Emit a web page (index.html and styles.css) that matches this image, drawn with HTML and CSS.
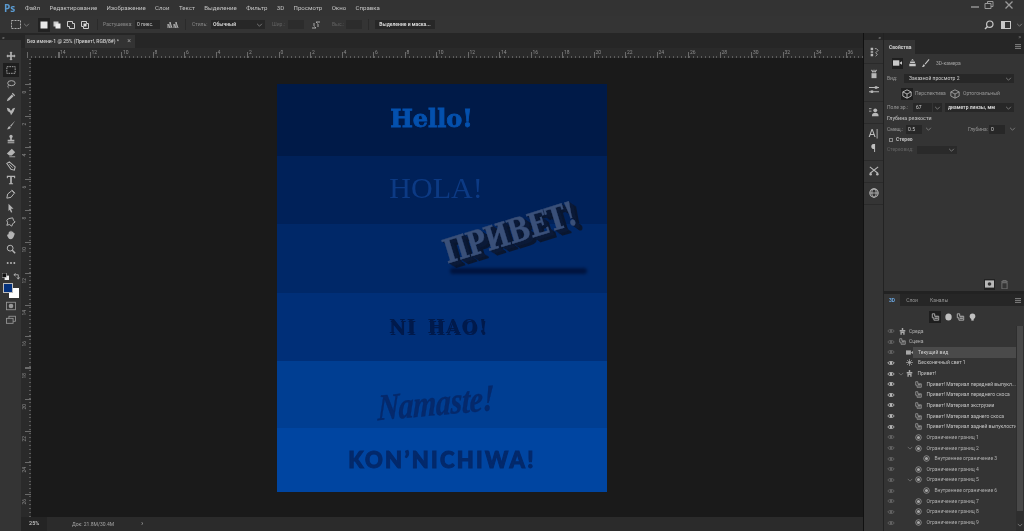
FILE: index.html
```html
<!DOCTYPE html>
<html lang="ru">
<head>
<meta charset="utf-8">
<title>Photoshop</title>
<link rel="stylesheet" href="styles.css">
</head>
<body>
<svg class="sprite" width="0" height="0">
  <defs>
    <symbol id="i-eye" viewBox="0 0 12 8"><path d="M1 4C3 1 9 1 11 4 9 7 3 7 1 4Z" fill="none" stroke="currentColor" stroke-width="1.1"/><circle cx="6" cy="4" r="1.6" fill="currentColor"/></symbol>
    <symbol id="i-mat" viewBox="0 0 10 10"><path d="M1 1h3v3h5v5H3V6H1Z" fill="none" stroke="currentColor"/><path d="M4 5h4M4 7h4" stroke="currentColor"/></symbol>
    <symbol id="i-bound" viewBox="0 0 10 10"><circle cx="5" cy="5" r="4" fill="none" stroke="currentColor"/><circle cx="5" cy="5" r="2.2" fill="currentColor"/></symbol>
    <symbol id="i-chev" viewBox="0 0 8 5"><path d="M1 1l3 3 3-3" fill="none" stroke="currentColor"/></symbol>
    <symbol id="i-cube" viewBox="0 0 12 12"><path d="M6 1l5 2.500v5L6 11 1 8.500v-5ZM1 3.500 6 6l5-2.500M6 6v5" fill="none" stroke="currentColor"/></symbol>
    <symbol id="i-cam" viewBox="0 0 10 8"><rect y="1" width="7" height="6" fill="currentColor"/><path d="M7 4l3-2v4Z" fill="currentColor"/></symbol>
    <symbol id="i-light" viewBox="0 0 10 10"><circle cx="5" cy="5" r="2" fill="currentColor"/><path d="M5 0v3M5 7v3M0 5h3M7 5h3M1.500 1.500l2 2M6.500 6.500l2 2M8.500 1.500l-2 2M3.500 6.500l-2 2" stroke="currentColor"/></symbol>
    <symbol id="i-mesh" viewBox="0 0 10 10"><path d="M4 0h2v3h3v2H1V3h3ZM2 5.500v4h2V7h2v2.500h2v-4" fill="currentColor"/></symbol>
  </defs>
</svg>
<div class="app">
  <header class="menu">
    <span class="logo">Ps</span>
    <nav class="menu-items">
      <span>Файл</span><span>Редактирование</span><span>Изображение</span><span>Слои</span><span>Текст</span><span>Выделение</span><span>Фильтр</span><span>3D</span><span>Просмотр</span><span>Окно</span><span>Справка</span>
    </nav>
    <div class="win-controls">
      <svg class="ico10" viewBox="0 0 10 10"><path d="M1 7h8" stroke="currentColor" stroke-width="1.400"/></svg>
      <svg class="ico10" viewBox="0 0 10 10"><path d="M1 3.500h6v5H1ZM3.500 3.500V1.500h5.500v5H7" fill="none" stroke="currentColor"/></svg>
      <svg class="ico10 win-close" viewBox="0 0 10 10"><path d="M1.500 1.500l7 7M8.500 1.500l-7 7" stroke="currentColor" stroke-width="1.300"/></svg>
    </div>
  </header>

  <section class="options">
    <svg class="opt-marquee" viewBox="0 0 10 9"><rect x=".5" y=".5" width="9" height="8" fill="none" stroke="currentColor" stroke-dasharray="2 1"/></svg>
    <svg class="chev"><use href="#i-chev"/></svg>
    <div class="mode-group">
      <span class="mode active"><svg class="ico8" viewBox="0 0 8 8"><rect width="7" height="7" x=".5" y=".5" fill="#e8e8e8"/></svg></span>
      <span class="mode"><svg class="ico8" viewBox="0 0 8 8"><rect width="5" height="5" x=".5" y=".5" fill="#ccc"/><rect width="5" height="5" x="2.500" y="2.500" fill="#eee"/></svg></span>
      <span class="mode"><svg class="ico8" viewBox="0 0 8 8"><path d="M.5.5h5v2h2v5h-5v-2h-2Z" fill="none" stroke="#ccc"/></svg></span>
      <span class="mode"><svg class="ico8" viewBox="0 0 8 8"><path d="M.5.5h5v2h2v5h-5v-2h-2Z" fill="none" stroke="#ccc"/><rect x="2.500" y="2.500" width="3" height="3" fill="#ddd"/></svg></span>
    </div>
    <span class="opt-sep"></span>
    <span class="lbl dim l-feather">Растушевка:</span>
    <span class="field feather">0 пикс.</span>
    <svg class="opt-smooth" viewBox="0 0 12 8"><path d="M1 7V3l2 4V1l2 6M7 7V3l2 4V1l2 6" fill="none" stroke="currentColor"/></svg>
    <span class="opt-sep"></span>
    <span class="lbl dim l-style">Стиль:</span>
    <span class="field style-select">Обычный<svg class="chev"><use href="#i-chev"/></svg></span>
    <span class="lbl dimmer l-wh">Шир.:</span>
    <span class="field small-input w-in"></span>
    <svg class="opt-swap" viewBox="0 0 10 10"><path d="M1 8h4M5 8L3.500 6.500M5 2h4M5 2l1.500 1.500M7 4v3M3 3v3" fill="none" stroke="currentColor"/></svg>
    <span class="lbl dimmer l-wh">Выс.:</span>
    <span class="field small-input"></span>
    <span class="opt-sep"></span>
    <span class="btn">Выделение и маска...</span>
    <div class="opt-right">
      <svg class="ico10" viewBox="0 0 10 10"><circle cx="5.800" cy="4.200" r="3.200" fill="none" stroke="currentColor" stroke-width="1.200"/><path d="M3.500 6.500L1 9" stroke="currentColor" stroke-width="1.400"/></svg>
      <svg class="ws-icon" viewBox="0 0 10 8"><rect x=".5" y=".5" width="9" height="7" fill="none" stroke="currentColor"/><rect x="1" y="1" width="3" height="6" fill="currentColor"/></svg>
      <svg class="chev"><use href="#i-chev"/></svg>
    </div>
  </section>

  <main class="main">
    <aside class="tools">
      <div class="strip-head">«</div>
      <div class="tool-list">
        <svg viewBox="0 0 12 12" class="tool"><path d="M6 .5l2 2H7v2.500h2.500v-1l2 2-2 2v-1H7v2.500h1l-2 2-2-2h1V7H2.500v1l-2-2 2-2v1H5V2.500H4Z" fill="currentColor"/></svg>
        <span class="tool-active"><svg viewBox="0 0 12 12" class="tool"><rect x="1" y="2" width="10" height="8" fill="none" stroke="currentColor" stroke-dasharray="2 1"/></svg></span>
        <svg viewBox="0 0 12 12" class="tool"><ellipse cx="6.500" cy="5" rx="4.500" ry="3" fill="none" stroke="currentColor" stroke-width="1.100"/><path d="M3 7.500c-1 1-1 2.500 0 3" fill="none" stroke="currentColor"/></svg>
        <svg viewBox="0 0 12 12" class="tool"><path d="M1 11l1-3 5-5 2 2-5 5ZM7 2l1-1 3 3-1 1Z" fill="currentColor"/></svg>
        <svg viewBox="0 0 12 12" class="tool"><path d="M1 2l3 1 2 3 2-3 3-1-2 5-3 4-1-3-3-2Z" fill="currentColor"/></svg>
        <svg viewBox="0 0 12 12" class="tool"><path d="M11 1L5 7l1 1 5-7ZM4 7.500c-2 .5-1 2.500-3 3.500 3 .5 5-1 4.500-2.500Z" fill="currentColor"/></svg>
        <svg viewBox="0 0 12 12" class="tool"><circle cx="6" cy="3" r="2" fill="currentColor"/><path d="M5 4h2v3h3v2H2V7h3ZM2 10h8v1H2Z" fill="currentColor"/></svg>
        <svg viewBox="0 0 12 12" class="tool"><path d="M7 1l4 4-4 4H4L1 6.500Z" fill="currentColor"/><path d="M4 10.500h7" stroke="currentColor"/></svg>
        <svg viewBox="0 0 12 12" class="tool"><path d="M1 3l3-2 7 6-1 4-4-1Z" fill="none" stroke="currentColor" stroke-width="1.300"/><path d="M4 4l4 4" stroke="currentColor"/></svg>
        <svg viewBox="0 0 12 12" class="tool"><path d="M1 1h10v3h-1L9.500 2.500H7v7.500h1.500v1h-5v-1H5V2.500H2.500L2 4H1Z" fill="currentColor"/></svg>
        <svg viewBox="0 0 12 12" class="tool"><path d="M1 11l1-5 5-4 3 3-4 5Z" fill="none" stroke="currentColor" stroke-width="1.200"/><path d="M7 1l4 4" stroke="currentColor"/></svg>
        <svg viewBox="0 0 12 12" class="tool"><path d="M3 1l6 6H6l1.500 4-1.500.500L4.500 8 3 9.500Z" fill="currentColor"/></svg>
        <svg viewBox="0 0 12 12" class="tool"><path d="M3 2l5-1 1 3 2 2-3 2-1 3-3-2-3 1 1-3-1-3Z" fill="none" stroke="currentColor" stroke-width="1.200"/></svg>
        <svg viewBox="0 0 12 12" class="tool"><path d="M3 5c0-4 2-4 2-2 0-3 2-3 2 0 1-2 2-1 2 1 1-1 2 0 1 2-1 3-2 5-4 5S3 10 2 8 1 5 3 5Z" fill="currentColor"/></svg>
        <svg viewBox="0 0 12 12" class="tool"><circle cx="5" cy="5" r="3.500" fill="none" stroke="currentColor" stroke-width="1.200"/><path d="M7.500 7.500L11 11" stroke="currentColor" stroke-width="1.800"/></svg>
        <svg viewBox="0 0 12 12" class="tool"><circle cx="2" cy="6" r="1.200" fill="currentColor"/><circle cx="6" cy="6" r="1.200" fill="currentColor"/><circle cx="10" cy="6" r="1.200" fill="currentColor"/></svg>
      </div>
      <div class="swatch-tools">
        <svg viewBox="0 0 8 8" class="ico7"><rect x="3" y="3" width="5" height="5" fill="#eee"/><rect width="5" height="5" fill="#111" stroke="#ddd" stroke-width=".6"/></svg>
        <svg viewBox="0 0 8 8" class="ico7"><path d="M1 2h5v5M1 2l2-1.500M1 2l2 1.500M6 7L4.500 5M6 7l1.500-2" fill="none" stroke="currentColor"/></svg>
      </div>
      <div class="swatches"><span class="bg-swatch"></span><span class="fg-swatch"></span></div>
      <svg viewBox="0 0 12 10" class="tool mask-tool"><rect x=".5" y=".5" width="11" height="9" fill="none" stroke="currentColor"/><circle cx="6" cy="5" r="2.800" fill="currentColor"/></svg>
      <svg viewBox="0 0 12 10" class="tool screen-tool"><rect x="3.500" y=".5" width="8" height="6" fill="none" stroke="currentColor"/><rect x=".5" y="3" width="8" height="6" fill="#3a3a3a" stroke="currentColor"/></svg>
    </aside>

    <div class="center">
      <div class="tabbar">
        <div class="doc-tab"><span>Без имени-1 @ 25% (Привет!, RGB/8#) *</span><b class="tab-x">×</b></div>
      </div>
      <div class="h-ruler">
        <span>14</span><span>12</span><span>10</span><span>8</span><span>6</span><span>4</span><span>2</span><span>0</span><span>2</span><span>4</span><span>6</span><span>8</span><span>10</span><span>12</span><span>14</span><span>16</span><span>18</span><span>20</span><span>22</span><span>24</span><span>26</span><span>28</span><span>30</span><span>32</span><span>34</span><span>36</span>
      </div>
      <div class="stage">
        <div class="v-ruler">
          <span>0</span><span>2</span><span>4</span><span>6</span><span>8</span><span>10</span><span>12</span><span>14</span><span>16</span><span>18</span><span>20</span><span>22</span><span>24</span><span>26</span>
        </div>
        <div class="workspace">
          <div class="canvas">
            <div class="band b1"><span class="t-hello">Hello!</span></div>
            <div class="band b2"><span class="t-hola">HOLA!</span></div>
            <div class="band b3"></div>
            <div class="band b4"><span class="t-nihao">NI HAO!</span></div>
            <div class="band b5"><span class="t-namaste">Namaste!</span></div>
            <div class="band b6"><span class="t-kon">KON’NICHIWA!</span></div>
            <span class="t-privet">ПРИВЕТ!</span>
            <span class="privet-shadow"></span>
          </div>
        </div>
      </div>
      <footer class="status">
        <span class="zoom-val">25%</span>
        <span class="doc-size">Док: 21.8M/30.4M</span>
        <span class="status-arrow">›</span>
      </footer>
    </div>

    <aside class="dock">
      <div class="icon-strip">
        <div class="strip-head">«</div>
        <div class="strip-group">
          <svg viewBox="0 0 12 12" class="tool"><path d="M2 1h3v3H2ZM2 5h3v2H2ZM2 8h3v3H2Z" fill="currentColor"/><path d="M7 2h2l2 2-3 3 2 2-2 2" fill="none" stroke="currentColor"/></svg>
        </div>
        <div class="strip-group">
          <svg viewBox="0 0 12 12" class="tool"><path d="M3 5h6v6H3Z" fill="currentColor"/><path d="M3 1l2 3M9 1L7 4M6 1v3" stroke="currentColor" stroke-width="1.300"/></svg>
          <svg viewBox="0 0 12 12" class="tool"><path d="M0 3h12M0 8h12" stroke="currentColor" stroke-width="1.300"/><rect x="7" y="1.500" width="3" height="3" fill="currentColor"/><rect x="2" y="6.500" width="3" height="3" fill="currentColor"/></svg>
        </div>
        <div class="strip-group">
          <svg viewBox="0 0 12 12" class="tool"><circle cx="7.500" cy="4" r="2.300" fill="currentColor"/><path d="M3.500 11c0-3 1.500-4 4-4s4 1 4 4Z" fill="currentColor"/><path d="M0 2h3M0 5h3" stroke="currentColor"/></svg>
        </div>
        <div class="strip-group">
          <span class="strip-a">A|</span>
          <span class="strip-p">¶</span>
        </div>
        <div class="strip-group">
          <svg viewBox="0 0 12 12" class="tool"><path d="M1 1l10 8M11 1L1 9" stroke="currentColor" stroke-width="1.300"/><circle cx="2" cy="10" r="1.500" fill="currentColor"/><circle cx="10" cy="10" r="1.500" fill="currentColor"/></svg>
        </div>
        <div class="strip-group">
          <svg viewBox="0 0 12 12" class="tool"><circle cx="6" cy="6" r="5" fill="none" stroke="currentColor" stroke-width="1.300"/><ellipse cx="6" cy="6" rx="2.500" ry="5" fill="none" stroke="currentColor"/><path d="M1 6h10" stroke="currentColor"/></svg>
        </div>
      </div>

      <div class="panels">
        <div class="strip-head right">»</div>
        <section class="props">
          <div class="tabs"><span class="tab on">Свойства</span><i class="panel-menu"></i></div>
          <div class="prop-head">
            <span class="ph-cam"><svg class="ico8w"><use href="#i-cam"/></svg></span>
            <svg viewBox="0 0 10 10" class="ico8w ph-scene"><path d="M5 0l2 2H3ZM2 3h6v2H2ZM1 6h8v3H1Z" fill="currentColor"/></svg>
            <svg viewBox="0 0 10 10" class="ico8w ph-brush"><path d="M9 0L4 6l1 1 5-6ZM3 6.500C1.500 7 2 9 .5 10c2.500.3 4-1 3.500-2.500Z" fill="currentColor"/></svg>
            <span class="ph-title">3D-камера</span>
          </div>
          <div class="row view-row"><span class="lbl">Вид:</span><span class="field view-select">Заказной просмотр 2<svg class="chev"><use href="#i-chev"/></svg></span></div>
          <div class="row persp-row">
            <span class="cube-on"><svg class="ico10"><use href="#i-cube"/></svg></span><span class="lbl">Перспектива</span>
            <svg class="ico10 ortho"><use href="#i-cube"/></svg><span class="lbl">Ортогональный</span>
          </div>
          <div class="row fov-row">
            <span class="lbl l-fov">Поле зр.:</span><span class="field fov">67</span><span class="field chev-box"><svg class="chev"><use href="#i-chev"/></svg></span>
            <span class="field lens">диаметр линзы, мм<svg class="chev"><use href="#i-chev"/></svg></span>
          </div>
          <div class="section-title">Глубина резкости</div>
          <div class="row dof-row">
            <span class="lbl l-shift">Смещ.:</span><span class="field dof-in">0.5</span><svg class="chev"><use href="#i-chev"/></svg>
            <span class="lbl dof-depth">Глубина:</span><span class="field dof-in2">0</span><svg class="chev"><use href="#i-chev"/></svg>
          </div>
          <div class="row stereo-row"><span class="check"></span><span class="stereo">Стерео</span></div>
          <div class="row stereo2-row"><span class="lbl dimmer">Стереовид:</span><span class="field stereo-sel"><svg class="chev"><use href="#i-chev"/></svg></span></div>
          <div class="prop-foot">
            <span class="foot-on"><svg viewBox="0 0 10 8" class="ico8w"><rect width="10" height="8" fill="currentColor"/><circle cx="5" cy="4" r="2" fill="#333"/></svg></span>
            <svg viewBox="0 0 8 10" class="trash"><path d="M0 2h8M2 2V.5h4V2M1 3h6v7H1Z" fill="none" stroke="currentColor"/></svg>
          </div>
        </section>
        <section class="layers">
          <div class="tabs"><span class="tab on tab-3d">3D</span><span class="tab">Слои</span><span class="tab">Каналы</span><i class="panel-menu"></i></div>
          <div class="filter-row">
            <span class="filter-on"><svg class="ico8w"><use href="#i-mat"/></svg></span>
            <svg viewBox="0 0 10 10" class="ico8w"><ellipse cx="5" cy="5" rx="4" ry="4.500" fill="currentColor"/></svg>
            <svg class="ico8w"><use href="#i-mat"/></svg>
            <svg viewBox="0 0 10 10" class="ico8w"><circle cx="5" cy="4" r="3.500" fill="currentColor"/><rect x="3.500" y="7.500" width="3" height="2" fill="currentColor"/></svg>
          </div>
          <div class="tree-wrap">
            <ul class="tree">
              <li class="node"><svg class="eye"><use href="#i-eye"/></svg><span class="indent l0"></span><svg class="nico n0"><use href="#i-mesh"/></svg>Среда</li>
              <li class="node"><svg class="eye"><use href="#i-eye"/></svg><span class="indent l0"></span><svg class="nico n0"><use href="#i-mat"/></svg>Сцена</li>
              <li class="node sel"><svg class="eye"><use href="#i-eye"/></svg><span class="indent l1"></span><svg class="nico"><use href="#i-cam"/></svg>Текущий вид</li>
              <li class="node on"><svg class="eye"><use href="#i-eye"/></svg><span class="indent l1"></span><svg class="nico"><use href="#i-light"/></svg>Бесконечный свет 1</li>
              <li class="node on"><svg class="eye"><use href="#i-eye"/></svg><svg class="tw"><use href="#i-chev"/></svg><span class="indent lc1"></span><svg class="nico"><use href="#i-mesh"/></svg>Привет!</li>
              <li class="node on"><svg class="eye"><use href="#i-eye"/></svg><span class="indent l2"></span><svg class="nico"><use href="#i-mat"/></svg>Привет! Материал передней выпукл...</li>
              <li class="node on"><svg class="eye"><use href="#i-eye"/></svg><span class="indent l2"></span><svg class="nico"><use href="#i-mat"/></svg>Привет! Материал переднего скоса</li>
              <li class="node on"><svg class="eye"><use href="#i-eye"/></svg><span class="indent l2"></span><svg class="nico"><use href="#i-mat"/></svg>Привет! Материал экструзии</li>
              <li class="node on"><svg class="eye"><use href="#i-eye"/></svg><span class="indent l2"></span><svg class="nico"><use href="#i-mat"/></svg>Привет! Материал заднего скоса</li>
              <li class="node on"><svg class="eye"><use href="#i-eye"/></svg><span class="indent l2"></span><svg class="nico"><use href="#i-mat"/></svg>Привет! Материал задней выпуклости</li>
              <li class="node"><svg class="eye"><use href="#i-eye"/></svg><span class="indent l2"></span><svg class="nico"><use href="#i-bound"/></svg>Ограничение границ 1</li>
              <li class="node"><svg class="eye"><use href="#i-eye"/></svg><svg class="tw tw2"><use href="#i-chev"/></svg><span class="indent lc2"></span><svg class="nico"><use href="#i-bound"/></svg>Ограничение границ 2</li>
              <li class="node"><svg class="eye"><use href="#i-eye"/></svg><span class="indent l3"></span><svg class="nico"><use href="#i-bound"/></svg>Внутреннее ограничение 3</li>
              <li class="node"><svg class="eye"><use href="#i-eye"/></svg><span class="indent l2"></span><svg class="nico"><use href="#i-bound"/></svg>Ограничение границ 4</li>
              <li class="node"><svg class="eye"><use href="#i-eye"/></svg><svg class="tw tw2"><use href="#i-chev"/></svg><span class="indent lc2"></span><svg class="nico"><use href="#i-bound"/></svg>Ограничение границ 5</li>
              <li class="node"><svg class="eye"><use href="#i-eye"/></svg><span class="indent l3"></span><svg class="nico"><use href="#i-bound"/></svg>Внутреннее ограничение 6</li>
              <li class="node"><svg class="eye"><use href="#i-eye"/></svg><span class="indent l2"></span><svg class="nico"><use href="#i-bound"/></svg>Ограничение границ 7</li>
              <li class="node"><svg class="eye"><use href="#i-eye"/></svg><span class="indent l2"></span><svg class="nico"><use href="#i-bound"/></svg>Ограничение границ 8</li>
              <li class="node"><svg class="eye"><use href="#i-eye"/></svg><span class="indent l2"></span><svg class="nico"><use href="#i-bound"/></svg>Ограничение границ 9</li>
            </ul>
            <div class="scroll"><span class="thumb"></span><svg class="chev"><use href="#i-chev"/></svg></div>
          </div>
        </section>
      </div>
    </aside>
  </main>
</div>
</body>
</html>
```
FILE: styles.css
```css
* { box-sizing: border-box; }
html, body { margin: 0; height: 100%; background: #1a1a1a; overflow: hidden; }
.sprite { position: absolute; }
.app {
  width: 1024px; height: 531px; display: flex; flex-direction: column; overflow: hidden;
  background: #323232; color: #b4b4b4;
  font: 5px/1 Roboto, "Noto Sans", sans-serif;
  filter: blur(.35px);
}
svg { display: block; flex: none; }
.ico10 { width: 10px; height: 10px; }
.ico8 { width: 8px; height: 8px; }
.ico8w { width: 9px; height: 8px; }
.ico7 { width: 7px; height: 7px; }
.chev { width: 7px; height: 4px; color: #8a8a8a; }

/* menu */
.menu { height: 16px; display: flex; align-items: center; padding-left: 4px; background: #333; }
.logo { width: 21px; color: #5a9ad0; font: 700 10px/1 "Open Sans", sans-serif; }
.menu-items { display: flex; gap: 9.400px; font-size: 6.100px; color: #c4c4c4; }
.win-controls { margin-left: auto; align-self: flex-start; display: flex; gap: 4px; padding-right: 10px; color: #9a9a9a; }
.win-close { margin-left: 6px; }

/* options */
.options { height: 17px; display: flex; align-items: center; padding-left: 11px; background: #343434; font-size: 5px; }
.opt-marquee { width: 10px; height: 9px; color: #aaa; }
.options > .chev { margin-left: 2px; }
.mode-group { display: flex; margin-left: 8px; }
.mode { width: 14px; height: 14px; display: flex; align-items: center; justify-content: center; }
.mode.active { background: #222; width: 12px; }
.opt-sep { width: 1px; height: 11px; margin: 0 5px; background: #2a2a2a; }
.opt-smooth + .opt-sep { margin: 0 6px; }
.small-input + .opt-sep { margin: 0 6px; }
.lbl { white-space: nowrap; }
.dim { color: #8a8a8a; }
.dimmer { color: #626262; }
.field { display: flex; align-items: center; justify-content: space-between; height: 9px; padding: 0 2px; background: #272727; color: #d0d0d0; white-space: nowrap; }
.l-feather { width: 27px; }
.feather { width: 25px; margin-left: 5px; }
.opt-smooth { width: 12px; height: 8px; margin-left: 7px; color: #b0b0b0; }
.l-style { width: 14px; }
.style-select { width: 54px; margin: 0 7px 0 5px; font-weight: 700; }
.l-wh { width: 13px; }
.small-input { width: 16px; margin-left: 1px; background: #2c2c2c; }
.w-in { margin-left: 3px; }
.opt-swap { width: 10px; height: 10px; margin: 0 11px 0 7px; color: #aaa; }
.btn { height: 9px; width: 60px; display: flex; align-items: center; justify-content: center; background: #272727; color: #d8d8d8; font-weight: 700; white-space: nowrap; }
.opt-right { margin-left: auto; display: flex; align-items: center; gap: 5px; padding-right: 1px; color: #c8c8c8; }
.ws-icon { width: 10px; height: 8px; margin-left: 2px; }

/* main */
.main { flex: 1; display: flex; min-height: 0; }
.strip-head { height: 7px; background: #262626; color: #888; font-size: 6px; line-height: 7px; text-align: center; }
.strip-head.right { text-align: right; padding-right: 3px; }

/* left tools */
.tools { width: 21px; display: flex; flex-direction: column; align-items: center; background: #343434; color: #b4b4b4; }
.tools .strip-head { width: 100%; text-align: left; padding-left: 2px; }
.tool { width: 10px; height: 10px; }
.tool-list { display: flex; flex-direction: column; align-items: center; gap: 3.800px; margin-top: 11px; }
.tool-active { margin: -2px 0; padding: 2px 3px; background: #1e1e1e; }
.swatch-tools { display: flex; gap: 4px; margin-top: 5px; }
.swatches { position: relative; width: 16px; height: 15px; margin-top: 3px; }
.fg-swatch { position: absolute; left: 0; top: 0; width: 10px; height: 10px; background: #04317c; border: 1px solid #bbb; z-index: 1; }
.bg-swatch { position: absolute; left: 6px; top: 5px; width: 10px; height: 10px; background: #fff; }
.mask-tool { margin-top: 3.500px; color: #999; }
.screen-tool { margin-top: 4px; color: #999; }

/* center */
.center { flex: 1; min-width: 0; display: flex; flex-direction: column; background: #1a1a1a; border-right: 1px solid #111; }
.tabbar { height: 15px; display: flex; align-items: flex-end; padding-left: 4px; background: #262626; }
.doc-tab { width: 110px; height: 13px; display: flex; align-items: center; padding-left: 2px; background: #333; color: #d0d0d0; font-size: 5px; font-weight: 500; white-space: nowrap; }
.tab-x { margin-left: auto; margin-right: 4px; font-weight: 400; color: #999; font-size: 7px; }
.h-ruler {
  height: 10px; display: flex; padding-left: 37px; color: #8e8e8e; font-size: 5px; line-height: 9px; overflow: hidden;
  background-color: #2a2a2a;
  background-image:
    repeating-linear-gradient(90deg, #6a6a6a 0 1px, transparent 1px 31.500px),
    repeating-linear-gradient(90deg, #5c5c5c 0 1px, transparent 1px 3.940px);
  background-size: 100% 6px, 100% 2px;
  background-position: 6px 4px, 6px 8px;
  background-repeat: no-repeat;
}
.h-ruler span { flex: 0 0 31.500px; padding-left: 2px; }
.stage { flex: 1; display: flex; min-height: 0; }
.v-ruler {
  width: 10px; display: flex; flex-direction: column; padding-top: 18px; color: #8e8e8e; font-size: 5px; overflow: hidden;
  background-color: #2a2a2a;
  background-image:
    repeating-linear-gradient(0deg, #5c5c5c 0 1px, transparent 1px 3.940px),
    repeating-linear-gradient(180deg, #6a6a6a 0 1px, transparent 1px 31.500px);
  background-size: 2px 100%, 6px 100%;
  background-position: 8px 0, 4px 26px;
  background-repeat: no-repeat;
}
.v-ruler span { flex: 0 0 31.500px; writing-mode: vertical-rl; transform: rotate(180deg); text-align: center; line-height: 7px; }
.workspace { flex: 1; min-width: 0; padding: 26px 0 0 246px; background: #1a1a1a; overflow: hidden; }
.status { height: 14px; display: flex; align-items: center; color: #a4a4a4; font-size: 5px; background: #2b2b2b; }
.zoom-val { width: 26px; height: 100%; display: flex; align-items: center; padding-left: 8px; background: #242424; font-size: 5.500px; font-weight: 500; color: #c8c8c8; }
.doc-size { margin-left: 25px; width: 69px; white-space: nowrap; }
.status-arrow { font-size: 8px; }

/* canvas */
.canvas { position: relative; width: 330px; height: 408px; display: flex; flex-direction: column; }
.band { display: flex; align-items: center; justify-content: center; }
.b1 { height: 72px; background: #001a48; padding: 0 21px 2px 0; }
.b2 { height: 68px; background: #002159; padding: 0 12px 4px 0; }
.b3 { height: 69px; background: #002868; }
.b4 { height: 68px; background: #002f78; padding-right: 7px; }
.b5 { height: 67px; background: #003e92; padding: 15px 13px 0 0; }
.b6 { height: 64px; background: #0045a1; }
.t-hello { color: #0450ad; font: 900 24px/1 "DejaVu Serif", serif; letter-spacing: 0; -webkit-text-stroke: .8px #0450ad; }
.t-hola { color: #0c3a84; font: 400 30px/1 "Liberation Serif", serif; letter-spacing: 0; }
.t-nihao { color: #001a4c; font: 700 18px/1 "DejaVu Serif", serif; letter-spacing: 1.500px; text-shadow: 1px 2px 0 #001a4c; word-spacing: 3px; }
.t-namaste { color: #05296b; font: italic 700 31px/1 "Liberation Serif", serif; letter-spacing: -.3px; transform: rotate(-5deg) skewX(-6deg) scale(.96, 1.2); -webkit-text-stroke: .3px #05296b; }
.t-kon { color: #03296b; font: 900 22px/1 Lato, "DejaVu Sans", sans-serif; letter-spacing: 2.300px; -webkit-text-stroke: 1px #03296b; }
.t-privet {
  position: absolute; left: 167px; top: 152px; color: #3a5079;
  font: 900 33px/1 "DejaVu Serif", serif; letter-spacing: -1.200px; white-space: nowrap;
  transform: rotate(-17deg) scaleX(.8); transform-origin: left center;
  -webkit-text-stroke: .4px #3a5079;
  text-shadow: 1px 1px 0 #0b1a38, 2px 2px 0 #0b1a38, 3px 3px 0 #0b1a38, 4px 4px 0 #0b1a38, 5px 5px 0 #0a1730, 6px 6px 0 #0a1730, 7px 7px 0 #0a1730;
}
.privet-shadow { position: absolute; left: 173px; top: 184px; width: 137px; height: 6px; background: #00123a; border-radius: 3px; filter: blur(1.500px); opacity: .9; }

/* dock */
.dock { width: 160px; display: flex; background: #222; }
.icon-strip { width: 19px; display: flex; flex-direction: column; align-items: center; color: #b8b8b8; background: #343434; }
.icon-strip .strip-head { width: 100%; margin-bottom: 2px; text-align: right; padding-right: 2px; }
.strip-group { width: 100%; display: flex; flex-direction: column; align-items: center; gap: 6px; padding: 5px 0 6px; border-bottom: 1px solid #2a2a2a; }
.strip-a { font-size: 11px; line-height: 9px; color: #c0c0c0; }
.strip-p { font-size: 10px; line-height: 10px; color: #c0c0c0; }
.panels { flex: 1; margin-left: 1px; display: flex; flex-direction: column; min-width: 0; }
.tabs { height: 14px; display: flex; align-items: center; position: relative; background: #262626; }
.tab { height: 100%; padding: 0 4px; display: flex; align-items: center; color: #969696; font-size: 5px; }
.tab.on { background: #343434; color: #d0d0d0; font-weight: 700; }
.panel-menu { position: absolute; right: 3px; top: 4px; width: 6px; height: 5px; background: repeating-linear-gradient(180deg, #777 0 1px, #333 1px 2px); }
.props { height: 251px; background: #343434; font-size: 5px; }
.props .tabs .tab { width: 31px; padding-left: 5px; }
.prop-head { height: 18px; display: flex; align-items: center; padding-left: 8px; color: #c8c8c8; }
.ph-cam { width: 11px; height: 11px; display: flex; align-items: center; justify-content: center; background: #1f1f1f; }
.ph-scene { margin-left: 5px; }
.ph-brush { margin-left: 4px; }
.ph-title { margin-left: 6px; color: #a4a4a4; }
.row { display: flex; align-items: center; padding-left: 3px; color: #989898; }
.view-row { height: 13px; }
.view-row .lbl { width: 11px; }
.view-select { width: 110px; margin-left: 6px; padding-left: 5px; }
.persp-row { height: 17px; padding-left: 17px; }
.cube-on { width: 12px; height: 12px; margin-right: 2px; display: flex; align-items: center; justify-content: center; background: #1f1f1f; color: #ccc; }
.ortho { margin: 0 3px 0 5px; color: #aaa; }
.persp-row .lbl { width: 30px; }
.fov-row { height: 11px; }
.l-fov { width: 21px; }
.fov { width: 19px; margin-left: 5px; padding-left: 3px; }
.chev-box { width: 9px; margin: 0 3px 0 1px; padding: 0 1px; }
.lens { width: 69px; font-weight: 700; padding-left: 3px; }
.section-title { height: 11px; padding: 3px 0 0 3px; color: #b4b4b4; font-weight: 500; font-size: 5.400px; }
.dof-row { height: 10px; }
.l-shift { width: 15px; }
.dof-in { width: 16px; margin: 0 3px 0 4px; padding-left: 2px; }
.dof-depth { width: 21px; margin-left: 36px; }
.dof-in2 { width: 16px; margin: 0 4px 0 0; padding-left: 2px; }
.stereo-row { height: 11px; padding-left: 5px; }
.check { width: 4px; height: 4px; border: 1px solid #888; margin-right: 3px; }
.stereo { color: #c0c0c0; font-weight: 700; }
.stereo2-row { height: 9px; }
.stereo2-row .lbl { width: 25px; }
.stereo-sel { width: 40px; height: 8px; margin-left: 5px; background: #2a2a2a; justify-content: flex-end; }
.prop-foot { display: flex; justify-content: flex-end; align-items: center; gap: 6px; height: 14px; margin-top: 123px; padding-right: 16px; color: #b8b8b8; }
.foot-on { width: 11px; height: 11px; display: flex; align-items: center; justify-content: center; background: #222; }
.trash { width: 7px; height: 9px; color: #777; }

.layers { flex: 1; margin-top: 3px; display: flex; flex-direction: column; min-height: 0; background: #343434; font-size: 5px; }
.tab-3d { color: #6aa4dc !important; }
.layers .tabs { height: 12px; }
.layers .tab { padding: 0 6px; }
.layers .tab.on { padding: 0 5px; }
.filter-row { height: 19.700px; display: flex; align-items: center; gap: 3px; color: #c0c0c0; padding: 3px 0 0 45px; }
.filter-on { width: 12px; height: 12px; display: flex; align-items: center; justify-content: center; background: #1e1e1e; }
.tree-wrap { flex: 1; display: flex; min-height: 0; }
.tree { flex: 1; margin: 0; padding: 0; list-style: none; min-width: 0; }
.node { height: 10.650px; display: flex; align-items: center; position: relative; color: #b0b0b0; white-space: nowrap; overflow: hidden; }
.node.on { color: #c4c4c4; }
.node.sel { background: linear-gradient(90deg, transparent 29px, #4a4a4a 29px); color: #d0d0d0; }
.eye { width: 8px; height: 6px; margin-left: 3px; color: #6e6e6e; }
.node.on .eye { color: #d4d4d4; }
.nico { width: 7px; height: 7px; margin-right: 5px; color: #a8a8a8; }
.nico.n0 { margin-right: 3px; }
.indent { display: block; flex: none; }
.l0 { width: 4px; }
.l1 { width: 11px; }
.lc1 { width: 1.500px; }
.l2 { width: 19.500px; }
.lc2 { width: 1.500px; }
.l3 { width: 27.500px; }
.tw { width: 6px; height: 4px; margin-left: 3px; color: #777; }
.tw2 { margin-left: 12px; }
.scroll { width: 8px; padding: 0 1px 4px; display: flex; flex-direction: column; justify-content: space-between; background: #2e2e2e; }
.scroll .chev { width: 6px; }
.thumb { display: block; height: 185px; background: #484848; }
```
